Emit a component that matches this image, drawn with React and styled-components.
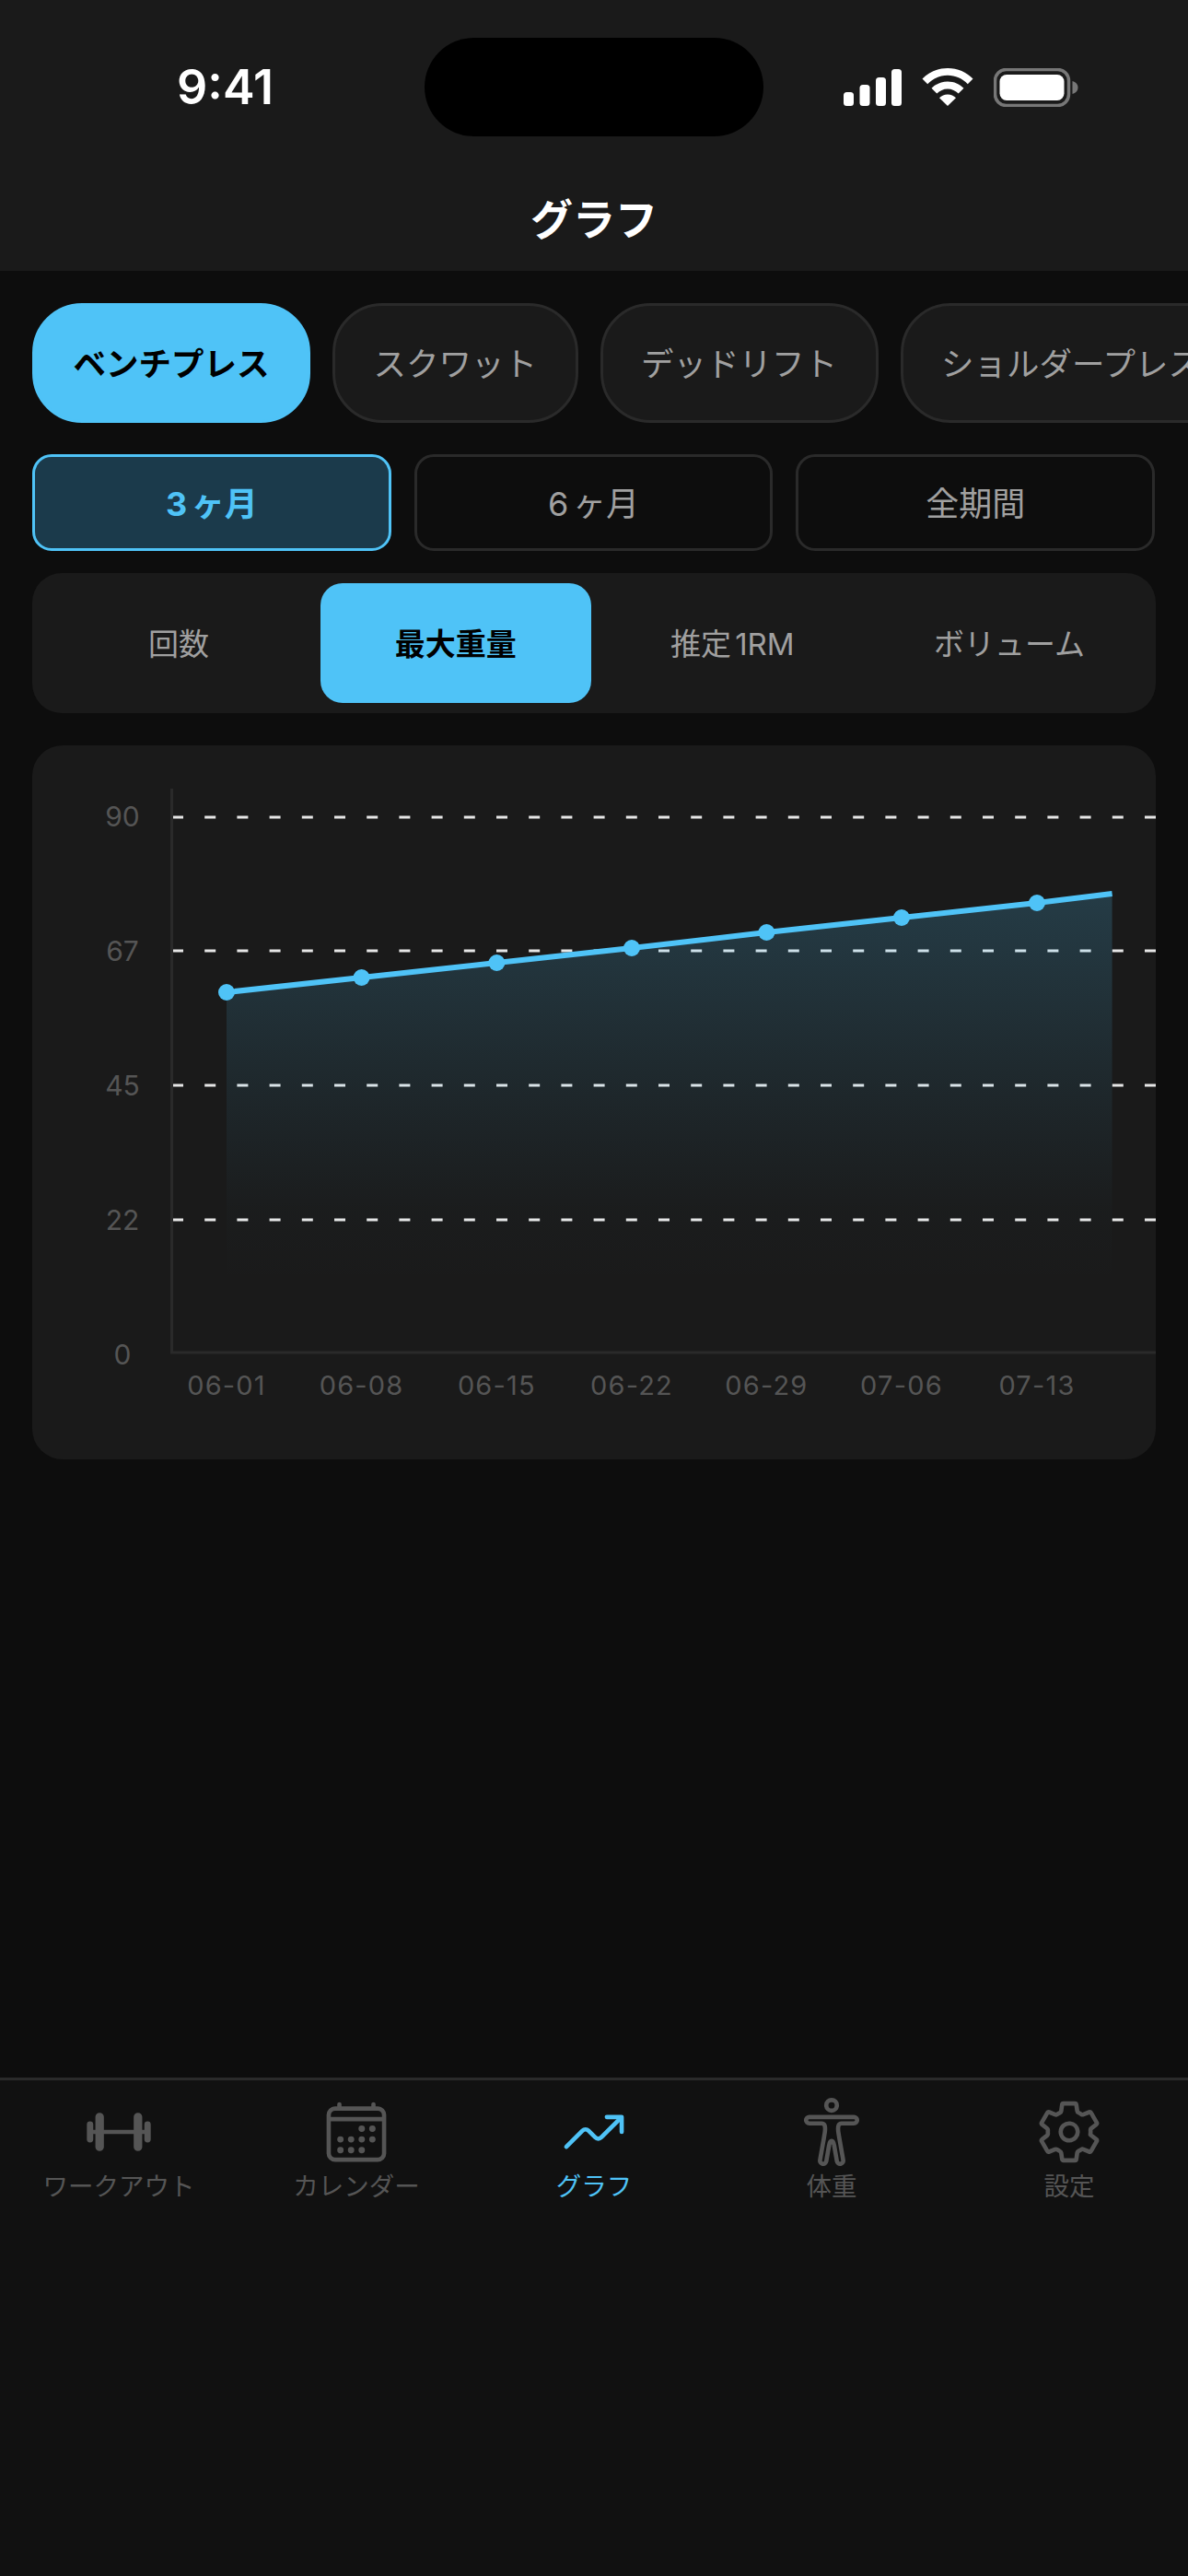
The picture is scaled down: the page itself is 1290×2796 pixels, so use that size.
import React from "react";
import styled, { createGlobalStyle } from "styled-components";
import {
  IoBarbellOutline,
  IoCalendarOutline,
  IoTrendingUpOutline,
  IoBodyOutline,
  IoSettingsOutline,
} from "react-icons/io5";

const ACCENT = "#4fc3f7";
const FONT = `Inter, "Noto Sans CJK JP", sans-serif`;

const GlobalStyle = createGlobalStyle`
  html, body {
    margin: 0;
    padding: 0;
    background: #0d0d0d;
  }
  * {
    box-sizing: border-box;
  }
`;

const Screen = styled.div`
  width: 1290px;
  height: 2796px;
  display: flex;
  flex-direction: column;
  background: #0d0d0d;
  font-family: ${FONT};
  text-autospace: normal;
  overflow: hidden;
`;

const Header = styled.header`
  height: 294px;
  padding-top: 41px;
  background: #1a1a1a;
  flex: none;
`;

const StatusBar = styled.div`
  height: 107px;
  display: grid;
  grid-template-columns: 461px 368px 461px;
  align-items: center;
`;

const Time = styled.div`
  padding-left: 28px;
  text-align: center;
  color: #fff;
  font-size: 52px;
  font-weight: 600;
  line-height: 1;
`;

const Island = styled.div`
  height: 107px;
  border-radius: 54px;
  background: #000;
`;

const StatusIcons = styled.div`
  padding-left: 87px;
  display: flex;
  align-items: center;
  gap: 22px;
`;

const Title = styled.h1`
  margin: 60px 0 0;
  text-align: center;
  color: #fff;
  font-size: 46px;
  font-weight: 700;
  line-height: 60px;
`;

const Main = styled.main`
  flex: 1;
  padding-top: 35px;
`;

const ChipRow = styled.div`
  display: flex;
  gap: 24px;
  padding-left: 35px;
  overflow: hidden;
`;

const Chip = styled.div`
  flex: none;
  height: 130px;
  padding: 0 41.5px 3px;
  display: flex;
  align-items: center;
  border-radius: 54px;
  border: 3px solid ${(p) => (p.$active ? ACCENT : "#2a2a2a")};
  background: ${(p) => (p.$active ? ACCENT : "#1a1a1a")};
  color: ${(p) => (p.$active ? "#000" : "#a0a0a0")};
  font-size: 35.5px;
  font-weight: ${(p) => (p.$active ? 700 : 400)};
  white-space: nowrap;
`;

const PeriodRow = styled.div`
  margin: 34px 36px 0 35px;
  display: grid;
  grid-template-columns: repeat(3, 1fr);
  gap: 25px;
`;

const PeriodButton = styled.div`
  height: 105px;
  padding-bottom: 3px;
  display: flex;
  align-items: center;
  justify-content: center;
  border-radius: 21px;
  border: 3px solid ${(p) => (p.$active ? ACCENT : "#2a2a2a")};
  background: ${(p) => (p.$active ? "#1b3a4b" : "transparent")};
  color: ${(p) => (p.$active ? ACCENT : "#a0a0a0")};
  font-size: 36px;
  font-weight: ${(p) => (p.$active ? 700 : 400)};
`;

const MetricBar = styled.div`
  margin: 24px 35px 0;
  height: 152px;
  padding: 11px 12px;
  display: grid;
  grid-template-columns: repeat(4, 1fr);
  gap: 7px;
  border-radius: 32px;
  background: #1a1a1a;
`;

const MetricTab = styled.div`
  padding-bottom: 3px;
  display: flex;
  align-items: center;
  justify-content: center;
  border-radius: 24px;
  background: ${(p) => (p.$active ? ACCENT : "transparent")};
  color: ${(p) => (p.$active ? "#000" : "#a0a0a0")};
  font-size: 33px;
  font-weight: ${(p) => (p.$active ? 700 : 400)};
`;

const ChartCard = styled.section`
  margin: 35px 35px 0;
  height: 775px;
  border-radius: 33px;
  background: #1a1a1a;
  overflow: hidden;
`;

const ChartSvg = styled.svg`
  display: block;
  width: 100%;
  height: 100%;
`;

const AxisText = styled.text`
  fill: #555;
  font-family: ${FONT};
  font-size: ${(p) => p.$size}px;
  letter-spacing: ${(p) => p.$spacing || 0}px;
  text-anchor: middle;
  dominant-baseline: central;
`;

const TabBar = styled.nav`
  flex: none;
  height: 541px;
  padding-top: 19px;
  display: grid;
  grid-template-columns: repeat(5, 1fr);
  align-items: start;
  border-top: 3px solid #2a2a2a;
  background: #111;
`;

const TabItem = styled.div`
  display: flex;
  flex-direction: column;
  align-items: center;
  color: ${(p) => (p.$active ? ACCENT : "#555")};
`;

const TabIcon = styled.div`
  height: 74px;
  display: flex;
  align-items: center;
  justify-content: center;
  font-size: 74px;
`;

const TabLabel = styled.div`
  margin-top: 4px;
  font-size: 27.5px;
  line-height: 36px;
`;

const points = [
  [246, 1077],
  [392.6, 1061],
  [539.4, 1045],
  [686, 1029],
  [832.4, 1012],
  [979, 996],
  [1126, 980],
];
const lineEnd = [1207.6, 970];
const linePath = [...points, lineEnd].map((p) => p.join(",")).join(" ");
const areaPath = `${linePath} 1207.6,1468 246,1468`;

const gridLines = [887, 1032, 1178, 1324];
const yLabels = [
  ["90", 886],
  ["67", 1032],
  ["45", 1178],
  ["22", 1324],
  ["0", 1470],
];
const xLabels = ["06-01", "06-08", "06-15", "06-22", "06-29", "07-06", "07-13"];

function Chart() {
  return (
    <ChartSvg viewBox="35 809 1220 775">
      <defs>
        <linearGradient id="area" gradientUnits="userSpaceOnUse" x1="0" y1="970" x2="0" y2="1395">
          <stop offset="0" stopColor={ACCENT} stopOpacity="0.2" />
          <stop offset="0.5" stopColor={ACCENT} stopOpacity="0.08" />
          <stop offset="0.8" stopColor={ACCENT} stopOpacity="0.015" />
          <stop offset="1" stopColor={ACCENT} stopOpacity="0" />
        </linearGradient>
      </defs>
      {gridLines.map((y) => (
        <line
          key={y}
          x1="187"
          x2="1255"
          y1={y}
          y2={y}
          stroke="#e6e6e6"
          strokeWidth="3"
          strokeDasharray="12 23.2"
        />
      ))}
      <line x1="186.5" x2="186.5" y1="856" y2="1469" stroke="#2a2a2a" strokeWidth="3" />
      <line x1="185" x2="1255" y1="1468" y2="1468" stroke="#2a2a2a" strokeWidth="3" />
      <polygon points={areaPath} fill="url(#area)" />
      <polyline points={linePath} fill="none" stroke={ACCENT} strokeWidth="6" />
      {points.map(([x, y]) => (
        <circle key={x} cx={x} cy={y} r="9" fill={ACCENT} />
      ))}
      {yLabels.map(([label, y]) => (
        <AxisText key={label} $size={30} x="133" y={y}>
          {label}
        </AxisText>
      ))}
      {xLabels.map((label, i) => (
        <AxisText key={label} $size={29} $spacing={1.2} x={points[i][0]} y="1503">
          {label}
        </AxisText>
      ))}
    </ChartSvg>
  );
}

function SignalIcon() {
  return (
    <svg width="63" height="40" viewBox="0 0 63 40" fill="#fff">
      <rect x="0" y="25" width="11" height="15" rx="3.5" />
      <rect x="17.5" y="17" width="11" height="23" rx="3.5" />
      <rect x="35" y="9" width="11" height="31" rx="3.5" />
      <rect x="52" y="0" width="11" height="40" rx="3.5" />
    </svg>
  );
}

function WifiIcon() {
  return (
    <svg width="56" height="41" viewBox="0 0 56 41" fill="#fff">
      <path d="M28 0C17 0 7.5 4.3 .5 11.5l5.7 5.7C12 11.3 19.5 7.8 28 7.8s16 3.5 21.8 9.4l5.7-5.7C48.5 4.3 39 0 28 0z" />
      <path d="M28 14.500c-7 0-13 2.800-17.500 7.300l5.800 5.800C19.400 24.500 23.400 22.500 28 22.500s8.600 2 11.700 5.100l5.800-5.800C41 17.300 35 14.500 28 14.500z" />
      <path d="M28 28.500c-3.500 0-6.700 1.400-9 3.700L28 41l9-8.800c-2.300-2.300-5.500-3.700-9-3.700z" />
    </svg>
  );
}

function BatteryIcon() {
  return (
    <svg width="92" height="42" viewBox="0 0 92 42">
      <rect x="1.5" y="1.5" width="80" height="39" rx="12" fill="none" stroke="#777" strokeWidth="3.5" />
      <rect x="6.5" y="7" width="70" height="28" rx="7.5" fill="#fff" />
      <path d="M85.5 14c3.500 1 6 3.500 6 7s-2.500 6-6 7z" fill="#777" />
    </svg>
  );
}

const chips = ["ベンチプレス", "スクワット", "デッドリフト", "ショルダープレス"];
const periods = ["3ヶ月", "6ヶ月", "全期間"];
const metrics = ["回数", "最大重量", "推定1RM", "ボリューム"];
const tabs = [
  ["ワークアウト", IoBarbellOutline],
  ["カレンダー", IoCalendarOutline],
  ["グラフ", IoTrendingUpOutline],
  ["体重", IoBodyOutline],
  ["設定", IoSettingsOutline],
];

export default function App() {
  return (
    <Screen>
      <GlobalStyle />
      <Header>
        <StatusBar>
          <Time>9:41</Time>
          <Island />
          <StatusIcons>
            <SignalIcon />
            <WifiIcon />
            <BatteryIcon />
          </StatusIcons>
        </StatusBar>
        <Title>グラフ</Title>
      </Header>
      <Main>
        <ChipRow>
          {chips.map((c, i) => (
            <Chip key={c} $active={i === 0}>
              {c}
            </Chip>
          ))}
        </ChipRow>
        <PeriodRow>
          {periods.map((p, i) => (
            <PeriodButton key={p} $active={i === 0}>
              {p}
            </PeriodButton>
          ))}
        </PeriodRow>
        <MetricBar>
          {metrics.map((m, i) => (
            <MetricTab key={m} $active={i === 1}>
              {m}
            </MetricTab>
          ))}
        </MetricBar>
        <ChartCard>
          <Chart />
        </ChartCard>
      </Main>
      <TabBar>
        {tabs.map(([label, Icon], i) => (
          <TabItem key={label} $active={i === 2}>
            <TabIcon>
              <Icon />
            </TabIcon>
            <TabLabel>{label}</TabLabel>
          </TabItem>
        ))}
      </TabBar>
    </Screen>
  );
}
